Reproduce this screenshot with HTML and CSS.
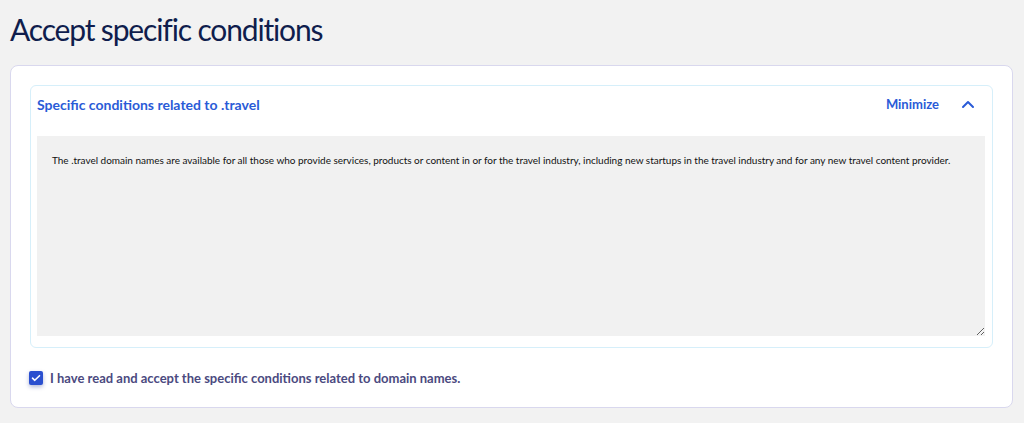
FILE: index.html
```html
<!DOCTYPE html>
<html lang="en">
<head>
<meta charset="utf-8">
<title>Accept specific conditions</title>
<link rel="stylesheet" href="styles.css">
</head>
<body>
<main class="page">
  <h1 class="title">Accept specific conditions</h1>
  <section class="card">
    <div class="panel">
      <div class="panel-head">
        <h2 class="panel-title">Specific conditions related to .travel</h2>
        <button class="toggle" type="button">
          <span class="toggle-text">Minimize</span>
          <svg class="chevron" width="14" height="10" viewBox="0 0 14 10" aria-hidden="true">
            <path d="M2 8 L7 3 L12 8" fill="none" stroke="#2a5bd7" stroke-width="2" stroke-linecap="round" stroke-linejoin="round"/>
          </svg>
        </button>
      </div>
      <textarea class="conditions" readonly>The .travel domain names are available for all those who provide services, products or content in or for the travel industry, including new startups in the travel industry and for any new travel content provider.</textarea>
    </div>
    <label class="accept">
      <span class="check">
        <svg width="10" height="8" viewBox="0 0 10 8" aria-hidden="true">
          <path d="M1.5 4.2 L3.8 6.3 L8.5 1.7" fill="none" stroke="#ffffff" stroke-width="1.6" stroke-linecap="round" stroke-linejoin="round"/>
        </svg>
      </span>
      <span class="accept-text">I have read and accept the specific conditions related to domain names.</span>
    </label>
  </section>
</main>
</body>
</html>
```

FILE: styles.css
```css
* { box-sizing: border-box; }
html, body { margin: 0; padding: 0; }
body {
  background: #f2f2f2;
  font-family: "Source Sans Pro", Lato, "Open Sans", sans-serif;
  width: 1024px;
  height: 423px;
  overflow: hidden;
}
.page {
  padding: 11px 11px 0 10px;
}
.title {
  margin: 0;
  font-size: 30px;
  font-weight: 400;
  color: #0f1d4d;
  line-height: 36px;
  letter-spacing: -1.15px;
}
.card {
  margin-top: 18px;
  background: #ffffff;
  border: 1px solid #d9d8ee;
  border-radius: 8px;
  padding: 19px 19px 21px 19px;
  height: 343px;
}
.panel {
  border: 1px solid #d6effa;
  border-radius: 6px;
  padding: 0 7px 11px 6px;
}
.panel-head {
  display: flex;
  align-items: center;
  justify-content: space-between;
  height: 50px;
  padding-bottom: 14px;
}
.panel-title {
  margin: 0;
  font-size: 14px;
  font-weight: 700;
  color: #2a5bd7;
}
.toggle {
  display: flex;
  align-items: center;
  gap: 22px;
  background: none;
  border: 0;
  padding: 0 10px 0 0;
  font-family: inherit;
  cursor: pointer;
}
.toggle-text {
  font-size: 13px;
  font-weight: 700;
  color: #2a5bd7;
}
.chevron { display: block; }
.conditions {
  display: block;
  width: 100%;
  height: 200px;
  margin: 0;
  border: 0;
  border-radius: 0;
  background: #f1f1f1;
  padding: 16px 15px;
  font-family: inherit;
  font-size: 10px;
  line-height: 16px;
  letter-spacing: -0.02px;
  color: #111111;
  resize: vertical;
  outline: none;
}
.accept {
  display: flex;
  align-items: center;
  gap: 7px;
  margin-top: 22px;
  margin-left: -1px;
}
.check {
  width: 14px;
  height: 14px;
  border-radius: 2px;
  background: #2a4fcf;
  display: flex;
  align-items: center;
  justify-content: center;
  box-shadow: 0 2px 4px rgba(30, 50, 140, 0.35);
}
.check svg { display: block; }
.accept-text {
  font-size: 13px;
  font-weight: 700;
  color: #4b4a80;
  letter-spacing: 0;
}
```
